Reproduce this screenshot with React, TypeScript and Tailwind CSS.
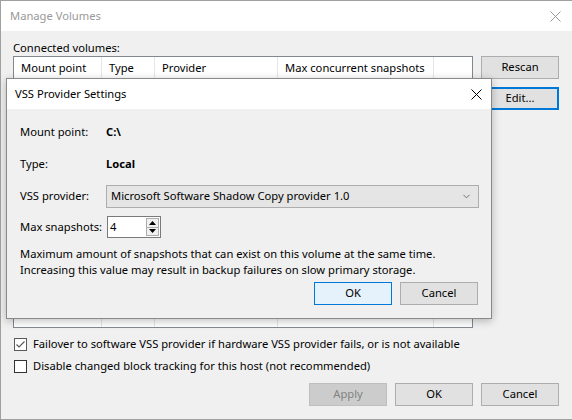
import { ChevronDown } from 'lucide-react';

const font = "font-['Noto_Sans','Liberation_Sans',sans-serif]";

const Btn = ({ label, variant = 'normal', className = '' }: { label: string; variant?: 'normal' | 'focus' | 'default' | 'disabled'; className?: string }) => {
  const styles = {
    normal: 'bg-[#e1e1e1] border border-[#adadad] text-black',
    focus: 'bg-[#e5f1fb] border border-[#0078d7] text-black',
    default: 'bg-[#e1e1e1] border-2 border-[#0078d7] text-black',
    disabled: 'bg-[#cccccc] border border-[#bfbfbf] text-[#838383]',
  }[variant];
  return (
    <div className={`w-[78px] h-[23px] flex items-center justify-center text-[11.2px] ${styles} ${className}`}>{label}</div>
  );
};

const CloseX = ({ color }: { color: string }) => (
  <svg width="11" height="11" viewBox="0 0 11 11">
    <path d="M0.5 0.5 L10.5 10.5 M10.5 0.5 L0.5 10.5" stroke={color} strokeWidth="1" />
  </svg>
);

const Checkbox = ({ checked }: { checked?: boolean }) => (
  <div className={`w-[13px] h-[13px] border bg-white flex items-center justify-center shrink-0 ${checked ? 'border-[#5a5a5a]' : 'border-[#333333]'}`}>
    {checked && (
      <svg width="11" height="11" viewBox="0 0 11 11">
        <path d="M1.5 5.5 L4 8 L9.5 2.5" stroke="#5a5a5a" strokeWidth="1.2" fill="none" />
      </svg>
    )}
  </div>
);

const columns = [
  { name: 'Mount point', w: 'w-[88px]' },
  { name: 'Type', w: 'w-[53px]' },
  { name: 'Provider', w: 'w-[123px]' },
  { name: 'Max concurrent snapshots', w: 'w-[156px]' },
];

const VssDialog = () => (
  <div className="absolute left-[5px] top-[77px] w-[486px] h-[241px] border border-[#8a8a8a] bg-[#f0f0f0] shadow-[0_2px_8px_rgba(0,0,0,0.25)] flex flex-col">
    <div className="h-[30px] bg-white flex items-center justify-between pl-[8px] pr-[9px] shrink-0">
      <span className="text-[11.2px] text-black">VSS Provider Settings</span>
      <CloseX color="#000" />
    </div>
    <div className="flex flex-col pl-[13px] pr-[12px] text-[11.2px] text-black">
      <div className="flex items-center h-[16px] mt-[15px]">
        <span className="w-[86px]">Mount point:</span>
        <span className="font-bold">C:\</span>
      </div>
      <div className="flex items-center h-[16px] mt-[16px]">
        <span className="w-[86px]">Type:</span>
        <span className="font-bold">Local</span>
      </div>
      <div className="flex items-center h-[23px] mt-[13px]">
        <span className="w-[86px]">VSS provider:</span>
        <div className="flex-1 h-[23px] bg-[#e5e5e5] border border-[#adadad] flex items-center justify-between pl-[4px] pr-[6px]">
          <span>Microsoft Software Shadow Copy provider 1.0</span>
          <ChevronDown size={11} strokeWidth={1.5} className="text-[#404040]" />
        </div>
      </div>
      <div className="flex items-center h-[22px] mt-[8px]">
        <span className="w-[87px] whitespace-nowrap">Max snapshots:</span>
        <div className="w-[54px] h-[22px] bg-white border border-[#7a7a7a] flex items-center justify-between pl-[2px] pr-[1px]">
          <span>4</span>
          <div className="w-[13px] h-[18px] border border-[#adadad] bg-[#f0f0f0] flex flex-col">
            <div className="flex-1 flex items-center justify-center border-b border-[#adadad]">
              <svg width="7" height="4" viewBox="0 0 7 4"><path d="M3.5 0 L7 4 L0 4 Z" fill="#000" /></svg>
            </div>
            <div className="flex-1 flex items-center justify-center">
              <svg width="7" height="4" viewBox="0 0 7 4"><path d="M0 0 L7 0 L3.5 4 Z" fill="#000" /></svg>
            </div>
          </div>
        </div>
      </div>
      <p className="mt-[8px] leading-[16px]">
        Maximum amount of snapshots that can exist on this volume at the same time.
        <br />
        Increasing this value may result in backup failures on slow primary storage.
      </p>
      <div className="flex justify-end gap-[8px] mt-[4px] pr-[1px]">
        <Btn label="OK" variant="focus" />
        <Btn label="Cancel" />
      </div>
    </div>
  </div>
);

export default function App() {
  return (
    <div className={`relative w-[572px] h-[420px] bg-[#f0f0f0] border-l border-b border-t border-[#a0a0a0] flex flex-col ${font}`}>
      <div className="h-[30px] bg-white flex items-center justify-between pl-[9px] pr-[11px] shrink-0">
        <span className="text-[11.2px] text-[#999999]">Manage Volumes</span>
        <CloseX color="#999999" />
      </div>
      <div className="flex flex-1 pl-[12px] pr-[13px] text-[11.2px] text-black">
        <div className="flex flex-col">
          <div className="h-[16px] mt-[9px] leading-[16px]">Connected volumes:</div>
          <div className="w-[460px] h-[272px] border border-[#828790] bg-white flex">
            {columns.map((c) => (
              <div key={c.name} className={`${c.w} border-r border-[#e5e5e5] h-full`}>
                <div className="h-[22px] flex items-center pl-[7px] whitespace-nowrap">{c.name}</div>
              </div>
            ))}
          </div>
          <div className="flex items-center gap-[6px] h-[16px] mt-[8px] ml-[1px] whitespace-nowrap">
            <Checkbox checked />
            <span>Failover to software VSS provider if hardware VSS provider fails, or is not available</span>
          </div>
          <div className="flex items-center gap-[6px] h-[16px] mt-[6px] ml-[1px] whitespace-nowrap">
            <Checkbox />
            <span>Disable changed block tracking for this host (not recommended)</span>
          </div>
        </div>
        <div className="flex flex-col ml-auto mt-[25px] gap-[8px]">
          <Btn label="Rescan" />
          <Btn label="Edit..." variant="default" />
        </div>
      </div>
      <div className="absolute right-[13px] top-[382px] flex gap-[8px]">
        <Btn label="Apply" variant="disabled" />
        <Btn label="OK" />
        <Btn label="Cancel" />
      </div>
      <VssDialog />
    </div>
  );
}
